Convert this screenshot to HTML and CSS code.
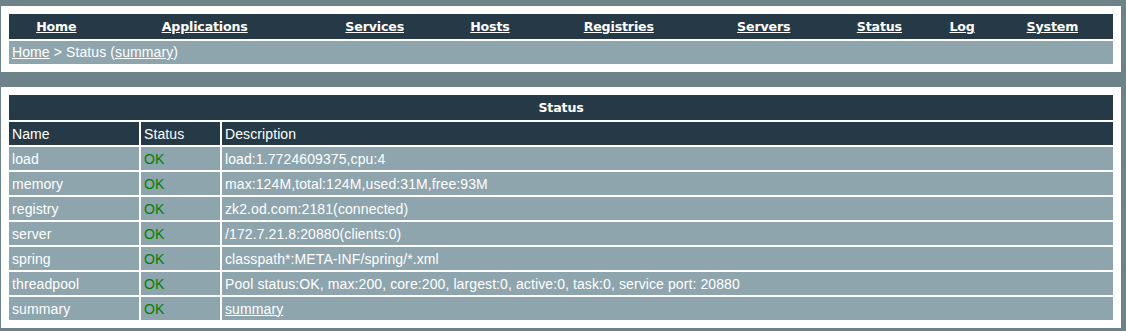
FILE: index.html
```html
<!DOCTYPE html>
<html lang="en">
<head>
    <meta charset="UTF-8">
    <title>Status</title>
    <link rel="stylesheet" href="styles.css">
</head>
<body>
    <!-- 상단 메뉴 -->
    <div class="panel header-panel">
        <table class="menu">
            <tr>
                <td><a href="#">Home</a></td>
                <td><a href="#">Applications</a></td>
                <td><a href="#">Services</a></td>
                <td><a href="#">Hosts</a></td>
                <td><a href="#">Registries</a></td>
                <td><a href="#">Servers</a></td>
                <td><a href="#">Status</a></td>
                <td><a href="#">Log</a></td>
                <td><a href="#">System</a></td>
            </tr>
        </table>
        <div class="breadcrumb"><a href="#">Home</a> &gt; Status (<a href="#">summary</a>)</div>
    </div>

    <!-- 상태 테이블 -->
    <div class="panel list-panel">
        <table class="list">
            <colgroup>
                <col class="col-name">
                <col class="col-status">
                <col>
            </colgroup>
            <tr>
                <th class="list-title" colspan="3">Status</th>
            </tr>
            <tr class="list-head">
                <td>Name</td>
                <td>Status</td>
                <td>Description</td>
            </tr>
            <tr>
                <td>load</td>
                <td class="ok">OK</td>
                <td>load:1.7724609375,cpu:4</td>
            </tr>
            <tr>
                <td>memory</td>
                <td class="ok">OK</td>
                <td>max:124M,total:124M,used:31M,free:93M</td>
            </tr>
            <tr>
                <td>registry</td>
                <td class="ok">OK</td>
                <td>zk2.od.com:2181(connected)</td>
            </tr>
            <tr>
                <td>server</td>
                <td class="ok">OK</td>
                <td>/172.7.21.8:20880(clients:0)</td>
            </tr>
            <tr>
                <td>spring</td>
                <td class="ok">OK</td>
                <td>classpath*:META-INF/spring/*.xml</td>
            </tr>
            <tr>
                <td>threadpool</td>
                <td class="ok">OK</td>
                <td>Pool status:OK, max:200, core:200, largest:0, active:0, task:0, service port: 20880</td>
            </tr>
            <tr>
                <td>summary</td>
                <td class="ok">OK</td>
                <td><a href="#">summary</a></td>
            </tr>
        </table>
    </div>
</body>
</html>
```

FILE: styles.css
```css
* {
    box-sizing: border-box;
}

body {
    margin: 0;
    padding: 6px 5px 0 1px;
    background-color: #6d8289;
    font-family: "Liberation Sans", Arial, sans-serif;
    font-size: 14px;
    letter-spacing: 0.1px;
    color: #fff;
}

a {
    color: #fff;
}

.panel {
    background-color: #fff;
}

.header-panel {
    padding: 8px;
    margin-bottom: 15px;
}

/* 메뉴 */
.menu {
    width: 100%;
    height: 25px;
    border-collapse: collapse;
    background-color: #253a46;
}

.menu td {
    padding: 0;
    text-align: center;
    font-family: "DejaVu Sans", Verdana, sans-serif;
    font-weight: bold;
    font-size: 12.6px;
    letter-spacing: -0.15px;
}

.breadcrumb {
    margin-top: 2px;
    height: 23px;
    line-height: 23px;
    padding: 0 3px;
    background-color: #8ea5ae;
}

/* 목록 */
.list-panel {
    padding: 6px;
}

.list {
    width: 100%;
    table-layout: fixed;
    border-spacing: 2px;
}

.col-name {
    width: 130px;
}

.col-status {
    width: 79px;
}

.list td {
    height: 23px;
    padding: 1px 3px 0;
    line-height: 17px;
    background-color: #8ea5ae;
    white-space: nowrap;
}

.list-title {
    height: 25px;
    padding: 0;
    background-color: #253a46;
    font-family: "DejaVu Sans", Verdana, sans-serif;
    font-size: 12.6px;
    letter-spacing: -0.15px;
    font-weight: bold;
    text-align: center;
}

.list .list-head td {
    background-color: #253a46;
}

.list .ok {
    color: #008000;
}
```
